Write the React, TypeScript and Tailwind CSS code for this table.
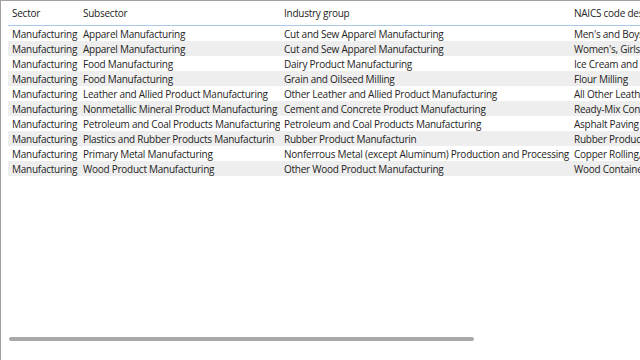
const rows = [
  ['Manufacturing', 'Apparel Manufacturing', 'Cut and Sew Apparel Manufacturing', "Men's and Boys' Cut and Sew Apparel Manufacturing"],
  ['Manufacturing', 'Apparel Manufacturing', 'Cut and Sew Apparel Manufacturing', "Women's, Girls', and Infants' Cut and Sew Apparel Manufacturing"],
  ['Manufacturing', 'Food Manufacturing', 'Dairy Product Manufacturing', 'Ice Cream and Frozen Dessert Manufacturing'],
  ['Manufacturing', 'Food Manufacturing', 'Grain and Oilseed Milling', 'Flour Milling'],
  ['Manufacturing', 'Leather and Allied Product Manufacturing', 'Other Leather and Allied Product Manufacturing', 'All Other Leather Good Manufacturing'],
  ['Manufacturing', 'Nonmetallic Mineral Product Manufacturing', 'Cement and Concrete Product Manufacturing', 'Ready-Mix Concrete Manufacturing'],
  ['Manufacturing', 'Petroleum and Coal Products Manufacturing', 'Petroleum and Coal Products Manufacturing', 'Asphalt Paving Mixture Manufacturing'],
  ['Manufacturing', 'Plastics and Rubber Products Manufacturin', 'Rubber Product Manufacturin', 'Rubber Product Manufacturing'],
  ['Manufacturing', 'Primary Metal Manufacturing', 'Nonferrous Metal (except Aluminum) Production and Processing', 'Copper Rolling, Drawing, and Extruding'],
  ['Manufacturing', 'Wood Product Manufacturing', 'Other Wood Product Manufacturing', 'Wood Container and Pallet Manufacturing'],
];

const headers = ['Sector', 'Subsector', 'Industry group', 'NAICS code description'];

export default function App() {
  return (
    <div
      className="relative w-[640px] h-[360px] overflow-hidden bg-white border-l border-t border-[#a0a0a0] text-[10px] tracking-[-0.25px] text-[#252423]"
      style={{ fontFamily: '"Segoe UI", "Open Sans", "Noto Sans", sans-serif' }}
    >
      <div className="pl-[7px] w-[900px]">
        <table className="table-fixed border-collapse w-[900px]">
          <colgroup>
            <col className="w-[71px]" />
            <col className="w-[201px]" />
            <col className="w-[290px]" />
            <col className="w-[338px]" />
          </colgroup>
          <thead>
            <tr className="h-[24px] border-b border-[#a9c9ea]">
              {headers.map((h) => (
                <th key={h} className="text-left font-normal pl-1 pt-[2px] whitespace-nowrap overflow-hidden leading-[15px]">
                  {h}
                </th>
              ))}
            </tr>
          </thead>
          <tbody>
            {rows.map((r, i) => (
              <tr key={i} className={`h-[15px] ${i % 2 === 1 ? 'bg-[#eeeeee]' : 'bg-white'}`}>
                {r.map((c, j) => (
                  <td key={j} className="pl-1 whitespace-nowrap overflow-hidden leading-[15px] p-0">
                    <span className="relative top-px">{c}</span>
                  </td>
                ))}
              </tr>
            ))}
          </tbody>
        </table>
      </div>

      {/* horizontal scrollbar */}
      <div className="absolute left-[8px] top-[336px] w-[465px] h-[4px] rounded-full bg-[#a8a8a8]" />
    </div>
  );
}
